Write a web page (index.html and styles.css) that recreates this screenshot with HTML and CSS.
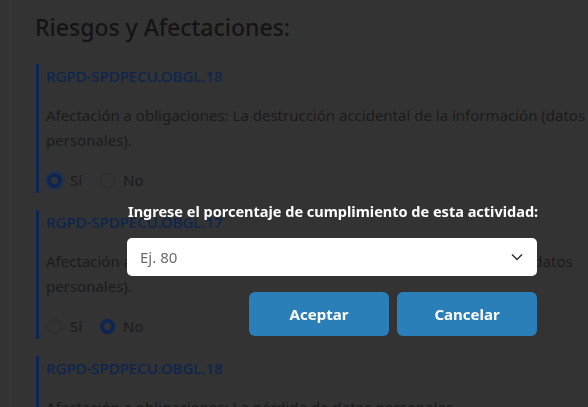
FILE: index.html
```html
<!DOCTYPE html>
<html lang="es">
<head>
<meta charset="utf-8">
<link rel="stylesheet" href="styles.css">
</head>
<body>
<div class="page">
  <h2 class="title">Riesgos y Afectaciones:</h2>
  <section class="risk">
    <div class="code">RGPD-SPDPECU.OBGL.18</div>
    <p class="desc">Afectación a obligaciones: La destrucción accidental de la información (datos personales).</p>
    <div class="radios">
      <label class="opt"><span class="radio checked focus"></span>Sí</label>
      <label class="opt"><span class="radio"></span>No</label>
    </div>
  </section>
  <section class="risk">
    <div class="code">RGPD-SPDPECU.OBGL.17</div>
    <p class="desc">Afectación a obligaciones: La alteración accidental de la información (datos personales).</p>
    <div class="radios">
      <label class="opt"><span class="radio"></span>Sí</label>
      <label class="opt"><span class="radio checked"></span>No</label>
    </div>
  </section>
  <section class="risk">
    <div class="code">RGPD-SPDPECU.OBGL.18</div>
    <p class="desc">Afectación a obligaciones: La pérdida de datos personales.</p>
  </section>
</div>

<div class="modal">
  <div class="dialog">
    <div class="label">Ingrese el porcentaje de cumplimiento de esta actividad:</div>
    <div class="select">
      <span class="placeholder">Ej. 80</span>
      <svg class="chev" width="12" height="8" viewBox="0 0 12 8"><path d="M1 1.5 L6 6.5 L11 1.5" fill="none" stroke="#333" stroke-width="1.5"/></svg>
    </div>
    <div class="actions">
      <button class="btn">Aceptar</button>
      <button class="btn">Cancelar</button>
    </div>
  </div>
</div>
</body>
</html>
```
FILE: styles.css
```css
html, body {
  margin: 0;
  padding: 0;
  height: 100%;
  overflow: hidden;
}
body {
  background: #333333;
  font-family: "Noto Sans", "Open Sans", sans-serif;
  color: #1b1b1b;
}
.page {
  margin-left: 10px;
  border-left: 1px solid #383838;
  padding: 12px 0 0 25px;
  height: 100%;
  box-sizing: border-box;
}
.title {
  margin: 0 0 22px -1px;
  font-size: 23px;
  font-weight: 500;
  line-height: 30px;
  color: #141414;
}
.risk {
  border-left: 3px solid #0c2552;
  padding: 2px 0 0 7px;
  margin-bottom: 17px;
}
.code {
  font-size: 15px;
  font-weight: 500;
  color: #0c2550;
  line-height: 20px;
  margin-bottom: 17px;
}
.desc {
  margin: 0 0 17px 0;
  font-size: 15px;
  line-height: 25px;
  width: 560px;
}
.radios {
  display: flex;
  gap: 17px;
  font-size: 15px;
  line-height: 20px;
  padding-bottom: 3px;
}
.opt {
  display: flex;
  align-items: center;
  gap: 8px;
}
.radio {
  width: 13px;
  height: 13px;
  border-radius: 50%;
  border: 1px solid #2c2c2c;
  margin-left: 1px;
}
.radio.checked {
  border: 4px solid #0c2552;
  width: 7px;
  height: 7px;
  background: #333;
}
.radio.focus {
  box-shadow: 0 0 0 3px #283242;
}
.modal {
  position: fixed;
  inset: 0;
}
.dialog {
  position: absolute;
  left: 127px;
  top: 200px;
  width: 410px;
  display: flex;
  flex-direction: column;
}
.label {
  color: #ffffff;
  font-weight: 700;
  font-size: 14.5px;
  line-height: 22px;
  white-space: nowrap;
  padding-left: 1px;
  margin-bottom: 16px;
}
.select {
  height: 38px;
  background: #ffffff;
  border-radius: 5px;
  display: flex;
  align-items: center;
  justify-content: space-between;
  padding: 0 14px 0 13px;
  box-sizing: border-box;
}
.placeholder {
  color: #6c6c6c;
  font-size: 15px;
}
.actions {
  display: flex;
  justify-content: flex-end;
  gap: 8px;
  margin-top: 16px;
}
.btn {
  width: 140px;
  height: 44px;
  border: none;
  border-radius: 6px;
  background: #2a7fb8;
  color: #ffffff;
  font-family: "Noto Sans", "Open Sans", sans-serif;
  font-weight: 700;
  font-size: 15px;
}
```
